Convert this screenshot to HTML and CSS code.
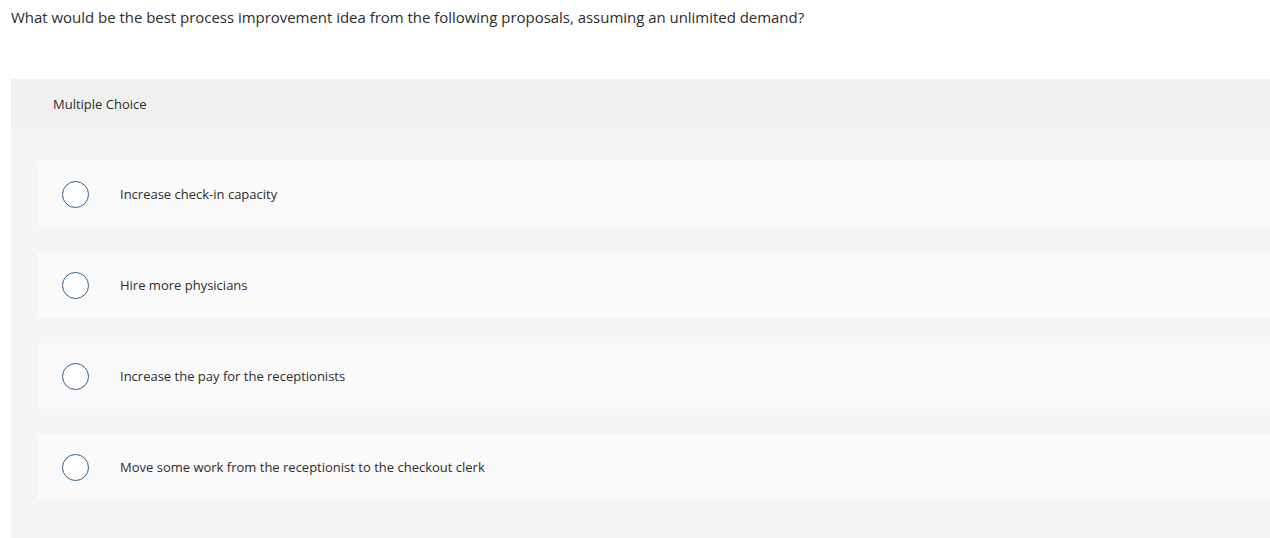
FILE: index.html
```html
<!DOCTYPE html>
<html>
<head>
<meta charset="utf-8">
<link rel="stylesheet" href="styles.css">
</head>
<body>
<div class="page">
  <p class="question">What would be the best process improvement idea from the following proposals, assuming an unlimited demand?</p>
  <div class="panel">
    <div class="panel-head">Multiple Choice</div>
    <div class="options">
      <div class="option"><span class="radio"></span><span class="label">Increase check-in capacity</span></div>
      <div class="option"><span class="radio"></span><span class="label">Hire more physicians</span></div>
      <div class="option"><span class="radio"></span><span class="label">Increase the pay for the receptionists</span></div>
      <div class="option"><span class="radio"></span><span class="label">Move some work from the receptionist to the checkout clerk</span></div>
    </div>
  </div>
</div>
</body>
</html>
```
FILE: styles.css
```css
html, body { margin: 0; padding: 0; background: #fff; }
body { font-family: "Open Sans", Lato, sans-serif; color: #333; }
.page { padding: 0 0 0 11px; }
.question {
  margin: 0;
  padding-top: 7px;
  font-size: 15px;
  line-height: 20px;
  letter-spacing: -0.03px;
  color: #2d2d2d;
  height: 19px;
}
.panel { margin-top: 53px; background: #f5f5f5; padding-bottom: 38px; }
.panel-head {
  background: #f0f0f0;
  height: 49px;
  padding-left: 42px;
  display: flex;
  align-items: center;
  font-size: 13px;
  color: #2d2d2d;
}
.options {
  display: flex;
  flex-direction: column;
  gap: 25px;
  padding: 33px 0 0 26px;
}
.option {
  height: 66px;
  background: #fafafa;
  border-radius: 3px 0 0 3px;
  display: flex;
  align-items: center;
  padding-left: 25px;
}
.radio {
  width: 25px;
  height: 25px;
  border: 1.5px solid #2f5f8d;
  border-radius: 50%;
  background: #fff;
  flex: none;
}
.label {
  margin-left: 31px;
  font-size: 13px;
  color: #2d2d2d;
}
```
